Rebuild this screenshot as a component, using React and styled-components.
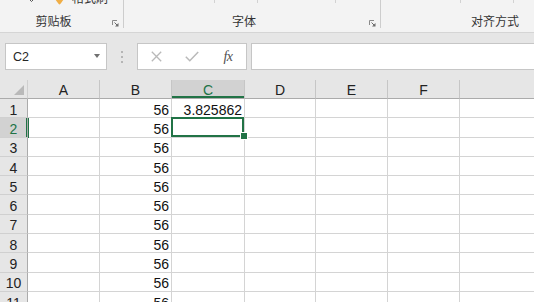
import React from 'react';
import styled, { createGlobalStyle } from 'styled-components';

const GREEN = '#217346';

const Global = createGlobalStyle`
  html, body { margin: 0; padding: 0; background: #fff; overflow: hidden; }
  body { font-family: "Liberation Sans", "Noto Sans CJK SC", sans-serif; }
  * { box-sizing: border-box; }
`;

const Page = styled.div`
  width: 534px;
  height: 302px;
  overflow: hidden;
  display: flex;
  flex-direction: column;
  background: #fff;
`;

/* ---------- Ribbon ---------- */
const Ribbon = styled.div`
  height: 33px;
  flex: none;
  background: #f3f3f3;
  border-bottom: 1px solid #d5d5d5;
  display: flex;
  align-items: flex-start;
  overflow: hidden;
`;

const Group = styled.div`
  flex: none;
  width: ${(p) => p.$w}px;
  height: 28px;
  border-right: ${(p) => (p.$sep ? '1px solid #cdcdcd' : 'none')};
  display: flex;
  flex-direction: column;
`;

const TopRow = styled.div`
  height: 6px;
  display: flex;
  align-items: flex-end;
  overflow: hidden;
`;

const Tick = styled.div`
  align-self: flex-start;
  width: 1px;
  height: 3px;
  background: #d2d2d2;
  margin-left: ${(p) => p.$ml}px;
`;

const Cut = styled.span`
  font-family: "Noto Sans CJK SC", sans-serif;
  font-size: 12px;
  line-height: 12px;
  color: #333;
  margin-left: ${(p) => p.$ml || 0}px;
  margin-bottom: 2px;
  white-space: nowrap;
`;

const IconSlot = styled.span`
  display: flex;
  margin-left: ${(p) => p.$ml || 0}px;
  margin-bottom: ${(p) => p.$mb || 0}px;
`;

const LabelRow = styled.div`
  flex: 1;
  display: flex;
  align-items: flex-end;
`;

const Label = styled.div`
  flex: 1;
  text-align: center;
  font-family: "Noto Sans CJK SC", sans-serif;
  font-size: 12px;
  line-height: 14px;
  color: #333;
  white-space: nowrap;
`;

const Launcher = styled.div`
  flex: none;
  width: 16px;
  height: 14px;
  display: flex;
  align-items: flex-end;
  justify-content: center;
  padding-bottom: 1px;
`;

const LauncherIcon = () => (
  <svg width="7" height="7" viewBox="0 0 7 7">
    <path d="M0.5 5 V0.5 H5" stroke="#8a8a8a" strokeWidth="1" fill="none" />
    <path d="M2.5 2.5 L6 6" stroke="#6a6a6a" strokeWidth="1" fill="none" />
    <path d="M6.5 3 V6.5 H3 Z" fill="#6a6a6a" />
  </svg>
);

/* ---------- Formula bar ---------- */
const FormulaBar = styled.div`
  height: 47px;
  flex: none;
  background: #e6e6e6;
  display: flex;
  align-items: flex-start;
  padding: 10px 0 0 5px;
`;

const Box = styled.div`
  flex: none;
  height: 27px;
  background: #fff;
  border: 1px solid #c6c6c6;
  display: flex;
  align-items: center;
  width: ${(p) => p.$w}px;
  margin-left: ${(p) => p.$ml || 0}px;
`;

const NameText = styled.span`
  flex: 1;
  padding-left: 7px;
  font-family: "Liberation Sans", sans-serif;
  font-size: 12.5px;
  color: #262626;
`;

const DropArrow = styled.span`
  width: 0;
  height: 0;
  border-left: 3.5px solid transparent;
  border-right: 3.5px solid transparent;
  border-top: 4px solid #707070;
  margin-right: 6px;
  margin-top: -1px;
`;

const Dots = styled.div`
  flex: none;
  width: 30px;
  height: 27px;
  display: flex;
  flex-direction: column;
  align-items: center;
  justify-content: center;
  gap: 3px;
`;

const Dot = styled.span`
  width: 2px;
  height: 2px;
  background: #b5b5b5;
`;

const FxBtn = styled.div`
  width: 36px;
  height: 25px;
  display: flex;
  align-items: center;
  justify-content: center;
`;

const FxText = styled.span`
  font-family: "Liberation Serif", serif;
  font-style: italic;
  font-size: 14px;
  color: #505050;
  letter-spacing: -0.5px;
  margin-top: 1px;
`;

/* ---------- Grid ---------- */
const Sheet = styled.div`
  flex: none;
  display: grid;
  grid-template-columns: 28px 72px 72px 73px 71px 72px 72px 170px;
  grid-template-rows: 19px;
  grid-auto-rows: 19.3px;
  background: #fff;
`;

const Corner = styled.div`
  position: relative;
  background: #e6e6e6;
  border-right: 1px solid #cfcfcf;
  border-bottom: 1px solid #ababab;
  &::after {
    content: '';
    position: absolute;
    right: 3px;
    bottom: 3px;
    width: 0;
    height: 0;
    border-left: 10px solid transparent;
    border-bottom: 10px solid #b9b9b9;
  }
`;

const ColHeader = styled.div`
  background: ${(p) => (p.$active ? '#d2d2d2' : '#e6e6e6')};
  color: ${(p) => (p.$active ? GREEN : '#222')};
  border-right: 1px solid #c6c6c6;
  border-bottom: 1px solid #ababab;
  box-shadow: ${(p) => (p.$active ? `inset 0 -2px 0 ${GREEN}` : 'none')};
  font-size: 14px;
  display: flex;
  align-items: center;
  justify-content: center;
  padding-top: 2px;
`;

const RowHeader = styled.div`
  position: relative;
  z-index: ${(p) => (p.$active ? 1 : 0)};
  background: ${(p) => (p.$active ? '#d2d2d2' : '#e6e6e6')};
  color: ${(p) => (p.$active ? GREEN : '#222')};
  border-right: 1px solid #ababab;
  border-bottom: 1px solid #d0d0d0;
  box-shadow: ${(p) => (p.$active ? `inset -1px 0 0 ${GREEN}, 1px 0 0 ${GREEN}` : 'none')};
  font-size: 14px;
  display: flex;
  align-items: center;
  justify-content: center;
  padding-top: 3px;
`;

const Cell = styled.div`
  position: relative;
  z-index: ${(p) => (p.$selected ? 2 : 0)};
  background: #fff;
  border-right: 1px solid #d4d4d4;
  border-bottom: 1px solid #d4d4d4;
  font-size: 14px;
  color: #111;
  display: flex;
  align-items: center;
  justify-content: flex-end;
  padding: 3px 2px 0 0;
  white-space: nowrap;
  ${(p) =>
    p.$selected &&
    `
    &::after {
      content: '';
      position: absolute;
      top: -1px;
      left: -1px;
      right: 0;
      bottom: 0;
      border: 2px solid ${GREEN};
      pointer-events: none;
    }
  `}
`;

const FillHandle = styled.span`
  position: absolute;
  right: -2.5px;
  bottom: -2.5px;
  width: 6px;
  height: 6px;
  background: ${GREEN};
  box-shadow: 0 0 0 1px #fff;
  z-index: 3;
`;

const cols = ['A', 'B', 'C', 'D', 'E', 'F', ''];
const rows = Array.from({ length: 12 }, (_, i) => i + 1);

const value = (col, row) => {
  if (col === 'B') return '56';
  if (col === 'C' && row === 1) return '3.825862';
  return '';
};

export default function App() {
  return (
    <Page>
      <Global />
      <Ribbon>
        <Group $w={124} $sep>
          <TopRow>
            <IconSlot $ml={29} $mb={4}>
              <svg width="5" height="3" viewBox="0 0 5 3">
                <path d="M0.5 0.5 L2.5 2.5 L4.5 0.5" stroke="#555" fill="none" />
              </svg>
            </IconSlot>
            <IconSlot $ml={21} $mb={1}>
              <svg width="9" height="6" viewBox="0 0 9 6">
                <path d="M0 0 H9 L5.5 4.8 Q4.5 6 3.5 4.8 Z" fill="#f0ae46" />
              </svg>
            </IconSlot>
            <Cut $ml={8}>格式刷</Cut>
          </TopRow>
          <LabelRow>
            <Label>剪贴板</Label>
            <Launcher>
              <LauncherIcon />
            </Launcher>
          </LabelRow>
        </Group>
        <Group $w={257} $sep>
          <TopRow>
            <Tick $ml={90} />
            <Tick $ml={42} />
            <Tick $ml={77} />
          </TopRow>
          <LabelRow>
            <Label>字体</Label>
            <Launcher>
              <LauncherIcon />
            </Launcher>
          </LabelRow>
        </Group>
        <Group $w={244}>
          <TopRow>
            <Tick $ml={79} />
            <Tick $ml={52} />
          </TopRow>
          <LabelRow>
            <Label>对齐方式</Label>
            <Launcher>
              <LauncherIcon />
            </Launcher>
          </LabelRow>
        </Group>
      </Ribbon>

      <FormulaBar>
        <Box $w={102}>
          <NameText>C2</NameText>
          <DropArrow />
        </Box>
        <Dots>
          <Dot />
          <Dot />
          <Dot />
        </Dots>
        <Box $w={110}>
          <FxBtn>
            <svg width="11" height="11" viewBox="0 0 11 11">
              <path d="M0.8 0.8 L10.2 10.2 M10.2 0.8 L0.8 10.2" stroke="#b9b9b9" strokeWidth="1.3" fill="none" />
            </svg>
          </FxBtn>
          <FxBtn>
            <svg width="14" height="11" viewBox="0 0 14 11">
              <path d="M0.8 5.8 L4.8 9.8 L13.2 1" stroke="#b9b9b9" strokeWidth="1.5" fill="none" />
            </svg>
          </FxBtn>
          <FxBtn>
            <FxText>fx</FxText>
          </FxBtn>
        </Box>
        <Box $w={300} $ml={4} />
      </FormulaBar>

      <Sheet>
        <Corner />
        {cols.map((c, i) => (
          <ColHeader key={i} $active={c === 'C'}>
            {c}
          </ColHeader>
        ))}
        {rows.map((r) => (
          <React.Fragment key={r}>
            <RowHeader $active={r === 2}>{r}</RowHeader>
            {cols.map((c, i) => {
              const sel = c === 'C' && r === 2;
              return (
                <Cell key={i} $selected={sel}>
                  {value(c, r)}
                  {sel && <FillHandle />}
                </Cell>
              );
            })}
          </React.Fragment>
        ))}
      </Sheet>
    </Page>
  );
}
